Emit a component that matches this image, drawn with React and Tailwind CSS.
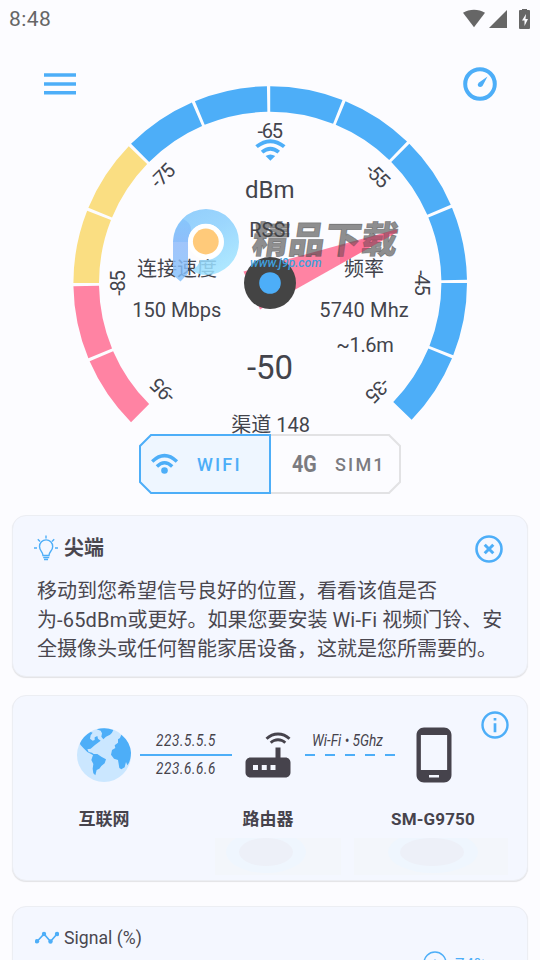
import React from 'react';
import { MdRouter, MdPhoneAndroid } from 'react-icons/md';

const CX = 270.2;
const CY = 283;
const SEGMENT = 22.5;
const GAP = 0.95;

const COLORS = ['#ff83a3', '#ff83a3', '#fade82', '#fade82', '#4daef8', '#4daef8', '#4daef8', '#4daef8', '#4daef8', '#4daef8', '#4daef8', '#4daef8'];

const point = (radius, deg) => {
  const rad = (deg * Math.PI) / 180;
  return `${(CX + radius * Math.sin(rad)).toFixed(2)} ${(CY - radius * Math.cos(rad)).toFixed(2)}`;
};

const segmentPath = (index) => {
  const from = -135 + index * SEGMENT;
  const to = from + SEGMENT - GAP;
  return `M${point(196.8, from)} A196.8 196.8 0 0 1 ${point(196.8, to)} L${point(171.2, to)} A171.2 171.2 0 0 0 ${point(171.2, from)} Z`;
};

const StatusBar = () => (
  <div className="flex h-[38px] items-center justify-between pl-[9px] pr-[9px] text-[#666]">
    <span className="text-[21px] leading-none tracking-[0.4px]">8:48</span>
    <svg className="h-5 w-[68px]" viewBox="463 7 68 20" fill="#666">
      <path d="M463 10.800C469.5 6.800 478.500 6.800 485 10.800L474 25.300Z" />
      <path d="M507 8V26H489Z" />
      <path fillRule="evenodd" d="M522 8V7h5v1h2q1 0 1 1V26q0 1-1 1h-9q-1 0-1-1V9q0-1 1-1ZM526 12l-4 6.500h2.500V24l3.500-7h-2.500Z" />
    </svg>
  </div>
);

const GaugeLogo = () => (
  <g>
    <defs>
      <linearGradient id="bowl" x1="0" y1="0" x2="0.6" y2="1">
        <stop offset="0" stopColor="#7ec4fb" />
        <stop offset="0.5" stopColor="#8bd0fd" />
        <stop offset="1" stopColor="#9fe3ff" />
      </linearGradient>
      <linearGradient id="stem" x1="0" y1="0" x2="0" y2="1">
        <stop offset="0" stopColor="#84c3fb" />
        <stop offset="0.4" stopColor="#8cb9fa" />
        <stop offset="1" stopColor="#82c0fb" />
      </linearGradient>
    </defs>
    <path d="M173 242A33 33 0 1 1 206 275Q198 275 192 270Q199 266 200 260H206A18 18 0 1 0 188 242Z" fill="url(#bowl)" fillOpacity="0.85" />
    <path d="M173 242Q174 228 183 219Q192 223 191 231Q188 236 188 242V273.500L180.500 281.500L173 275Z" fill="url(#stem)" fillOpacity="0.82" />
    <circle cx="205.800" cy="241.500" r="17.800" fill="#fff" />
    <circle cx="205.800" cy="241.500" r="12.900" fill="#ffca7a" />
  </g>
);

const Gauge = () => (
  <svg className="ml-1 h-[396px] w-[380px] overflow-visible" viewBox="80 38 380 396" fill="#43444c" fontSize="20">
    {COLORS.map((color, index) => (
      <path key={index} d={segmentPath(index)} fill={color} />
    ))}
    {[-95, -85, -75, -65, -55, -45, -35].map((value, index) => (
      <text key={value} x={CX} y="138" textAnchor="middle" textLength="25.500" transform={`rotate(${-135 + index * 45} ${CX} ${CY})`}>
        {value}
      </text>
    ))}
    <g fill="#4daef8">
      <path d="M255.300 145.300Q270.400 133.300 285.500 145.300L283 148Q270.400 138.300 257.800 148Z" />
      <path d="M260.800 150.800Q270.400 142.800 280 150.800L277.500 153.500Q270.400 148 263.300 153.500Z" />
      <path d="M265.600 156Q270.400 152.800 275.200 156L270.400 160.700Z" />
    </g>
    <text x="269.700" y="198" textAnchor="middle" fontSize="24">dBm</text>
    <text x="270" y="237" textAnchor="middle">RSSI</text>
    <text x="177" y="276" textAnchor="middle">连接速度</text>
    <text x="176.800" y="317" textAnchor="middle">150 Mbps</text>
    <text x="364" y="276" textAnchor="middle">频率</text>
    <text x="364" y="317" textAnchor="middle" textLength="89.500">5740 Mhz</text>
    <text x="365" y="352" textAnchor="middle" textLength="57.500">~1.6m</text>
    <text x="270" y="379" textAnchor="middle" fontSize="33">-50</text>
    <text x="270.700" y="432" textAnchor="middle">渠道 148</text>
    <path d="M243.500 271.500L396 229.500Q398 231 396.500 232.500L260 309.500Z" fill="#ff83a3" />
    <circle cx="270" cy="283" r="26" fill="#444" />
    <circle cx="270" cy="283" r="10.800" fill="#4daef8" />
    <GaugeLogo />
    <text x="0" y="0" fontSize="37" fontWeight="900" fill="#444" fillOpacity="0.62" stroke="#444" strokeOpacity="0.45" strokeWidth="0.8" textLength="145" lengthAdjust="spacingAndGlyphs" transform="translate(251 252.500) skewX(-8)">精品下载</text>
    <path d="M340 247L396 229.500Q398 231 396.500 232.500L340 264Z" fill="#ff4f80" fillOpacity="0.3" />
    <text x="250" y="266.500" fontSize="12.500" fontWeight="500" fontStyle="italic" fill="#3f9fdc" textLength="71.500" lengthAdjust="spacingAndGlyphs">www.j9p.com</text>
  </svg>
);

const NetworkToggle = () => (
  <div className="relative mx-auto flex h-[60px] w-[262px] text-[18px] font-medium tracking-[2.200px]">
    <svg className="absolute inset-0 h-full w-full" viewBox="0 0 262 60" fill="none" strokeWidth="2">
      <path d="M132 1H250L261 12V48L250 59H132" stroke="#e2e2e4" />
      <path d="M12 1H131V59H12L1 48V12Z" fill="#eef6ff" stroke="#4daef8" />
    </svg>
    <div className="relative flex w-[131px] items-center pl-3 text-[#4daef8]">
      <svg className="h-6 w-7" viewBox="151 452 28 24" fill="none" stroke="currentColor" strokeWidth="3.400">
        <path d="M152.200 461.500Q164.500 449.700 176.900 461.500" />
        <path d="M156.900 466.500Q164.500 459 172.200 466.500" />
        <circle cx="164.500" cy="470.500" r="3.300" fill="currentColor" stroke="none" />
      </svg>
      <span className="ml-[18px]">WIFI</span>
    </div>
    <div className="relative flex flex-1 items-center pl-[22px] text-[#7b7b80]">
      <span className="w-[43px] origin-left scale-x-82 text-[24px] leading-none font-bold tracking-normal">4G</span>
      <span>SIM1</span>
    </div>
  </div>
);

const Card = ({ className, children }) => (
  <div className={`relative mx-3 rounded-[14px] border border-[#eceef3] bg-[#f4f7ff] shadow-[0_1px_1px_rgba(0,0,0,0.1)] ${className}`}>
    {children}
  </div>
);

const TipCard = () => (
  <Card className="mt-[21px] h-[162px] pl-6 pt-[17px]">
    <div className="flex h-[30px] items-center">
      <svg className="-ml-[3px] h-[26px] w-[25px]" viewBox="34 534 25 26" fill="none" stroke="#4daef8" strokeWidth="1.400">
        <path d="M43 554.500C43 550.500 39.500 550 39.500 545.500a6.600 6.600 0 0 1 13.200 0C52.700 550 49 550.500 49 554.500Z" />
        <path d="M43.200 556.500h6M44 558.500h4M46 534.500v3M34 547h3M55 547h3M37.800 538.300l2.200 2.200M54.200 538.300l-2.200 2.200" />
      </svg>
      <h2 className="ml-[5px] text-[20px] leading-none font-bold text-[#4a474f]">尖端</h2>
    </div>
    <p className="mt-3.5 text-[20px] leading-[29px] whitespace-nowrap text-[#4a474f]">
      移动到您希望信号良好的位置，看看该值是否
      <br />
      为<span className="tracking-[0.200px]">-65dBm</span>或更好。如果您要安装 <span className="tracking-[0.150px]">Wi-Fi</span> 视频门铃、安
      <br />
      全摄像头或任何智能家居设备，这就是您所需要的。
    </p>
    <svg className="absolute right-6 top-[19px] h-7 w-7" viewBox="0 0 28 28" fill="none" stroke="#4daef8">
      <circle cx="14" cy="14" r="12.500" strokeWidth="2.600" />
      <path d="M9.700 9.700l8.600 8.600M18.300 9.700l-8.600 8.600" strokeWidth="3" />
    </svg>
  </Card>
);

const Globe = () => (
  <svg className="h-[54px] w-[54px]" viewBox="231 114 162 162">
    <circle cx="312" cy="195" r="81" fill="#cbe7ff" />
    <g fill="#4daef8">
      <path d="M240 160Q250 138 272 126L278 128L272 136L270 146L278 152L284 150L284 142L292 138L294 146L302 152L292 160L284 166L272 176L262 178L266 186L276 188L284 194L280 196L262 186L250 174L241 164Z" />
      <path d="M290 118Q316 110 340 120L336 128L330 134L318 140L310 148L304 140L306 130L302 122Z" />
      <path d="M280 192L292 192L304 200L318 208L314 220L304 228L298 236L290 240L286 256L280 250L278 236L280 222L274 210Z" />
      <path d="M364 134Q391 156 393 188Q392 214 382 226L378 216L374 232L364 238L358 234L354 210L342 206L333 194L336 180L346 174L344 166L354 158L354 148L360 144Z" />
    </g>
  </svg>
);

const NetworkCard = () => (
  <Card className="mt-[18px] h-[186px] pt-[29px] text-[#46434c]">
    <div className="flex">
      <div className="ml-16 flex w-[54px] flex-col items-center">
        <div className="flex h-[60px] items-center">
          <Globe />
        </div>
        <span className="mt-[22px] text-[17px] leading-6 font-bold whitespace-nowrap">互联网</span>
      </div>
      <div className="ml-[9px] w-[92px] pt-0.5 text-center text-[16.500px] leading-[28px] italic">
        <div className="h-[28px] scale-x-82 tracking-[0.700px] whitespace-nowrap">223.5.5.5</div>
        <div className="-mt-px h-0.5 bg-[#4daef8]" />
        <div className="-mt-px scale-x-82 tracking-[0.700px] whitespace-nowrap">223.6.6.6</div>
      </div>
      <div className="ml-1.5 flex w-[60px] flex-col items-center">
        <MdRouter className="h-[60px] w-[60px]" />
        <span className="mt-[22px] text-[17px] leading-6 font-bold whitespace-nowrap">路由器</span>
      </div>
      <div className="ml-[7px] w-[90px] pt-0.5 text-[16.500px] leading-[28px] italic">
        <div className="-ml-[11px] h-[29px] w-[107px] scale-x-83 text-center whitespace-nowrap">Wi-Fi • 5Ghz</div>
        <svg className="-mt-0.5 h-0.5 w-[90px]" viewBox="0 0 90 2">
          <path d="M0 1H90" stroke="#4daef8" strokeWidth="2" strokeDasharray="10 10" />
        </svg>
      </div>
      <div className="ml-[9px] flex w-[60px] flex-col items-center">
        <MdPhoneAndroid className="h-[60px] w-[60px]" />
        <span className="mt-[22px] -ml-0.5 text-[17px] leading-6 font-bold tracking-[0.150px] whitespace-nowrap">SM-G9750</span>
      </div>
    </div>
    <svg className="ml-[198px] mt-[7px] h-[37px] w-[300px]" viewBox="211 838 300 37">
      <path d="M215 838H341V875H215ZM354 838H508V875H354Z" fill="#f3f6fb" />
      <ellipse cx="266" cy="852" rx="40" ry="21" fill="#eff6fe" />
      <ellipse cx="266" cy="852" rx="27" ry="14" fill="#edf0f8" />
      <ellipse cx="433" cy="852" rx="45" ry="21" fill="#eff6fe" />
      <ellipse cx="432" cy="852" rx="32" ry="14" fill="#edf0f8" />
    </svg>
    <svg className="absolute right-[18px] top-[15px] h-7 w-7" viewBox="0 0 28 28" fill="none" stroke="#4daef8">
      <circle cx="14" cy="14" r="12.500" strokeWidth="2.400" />
      <path d="M14 7v2.600M14 12.300v9" strokeWidth="2.700" />
    </svg>
  </Card>
);

const SignalCard = () => (
  <Card className="mt-[25px] h-[120px] pl-[22px] pt-[19px]">
    <div className="flex items-center text-[#4a474f]">
      <svg className="h-3.5 w-6" viewBox="34 930 24 14" fill="#4daef8">
        <path d="M36 940.500L43 933L49.500 940.500L56 933" fill="none" stroke="#4daef8" strokeWidth="1.700" />
        <circle cx="36" cy="940.300" r="2.200" />
        <circle cx="43" cy="933" r="2.200" />
        <circle cx="49.500" cy="940.500" r="2.200" />
        <circle cx="56" cy="933" r="2.200" />
      </svg>
      <span className="ml-[5px] origin-left scale-x-98 text-[18px] leading-6">Signal (%)</span>
    </div>
    <div className="ml-[388px] mt-px flex items-start text-[#4daef8]">
      <svg className="h-6 w-6" viewBox="0 0 24 24" fill="none" stroke="currentColor" strokeWidth="1.500">
        <circle cx="12" cy="12" r="11" />
        <path d="M12 8.500v8" />
      </svg>
      <span className="ml-2 mt-[3px] text-[17px] leading-5">74%</span>
    </div>
  </Card>
);

export default function App() {
  return (
    <div className="h-[960px] w-[540px] overflow-hidden bg-[#fcfcff] font-['Roboto','Noto_Sans_CJK_SC',sans-serif]">
      <StatusBar />
      <div className="flex pl-11">
        <svg className="mt-[35px] h-[22px] w-8" viewBox="0 0 32 22" fill="#4daef8">
          <path d="M0 .3h32v3.400H0zM0 9.300h32v3.400H0zM0 18h32v3.400H0z" />
        </svg>
        <Gauge />
        <svg className="relative ml-[3px] mt-[29px] h-[34px] w-[34px]" viewBox="0 0 34 34">
          <circle cx="17" cy="17" r="14.800" fill="none" stroke="#4daef8" strokeWidth="4" />
          <path d="M24.500 9.500L19.500 19Q17 21.200 15 19Q14 17 16 15.500Z" fill="#4daef8" />
        </svg>
      </div>
      <NetworkToggle />
      <TipCard />
      <NetworkCard />
      <SignalCard />
    </div>
  );
}
